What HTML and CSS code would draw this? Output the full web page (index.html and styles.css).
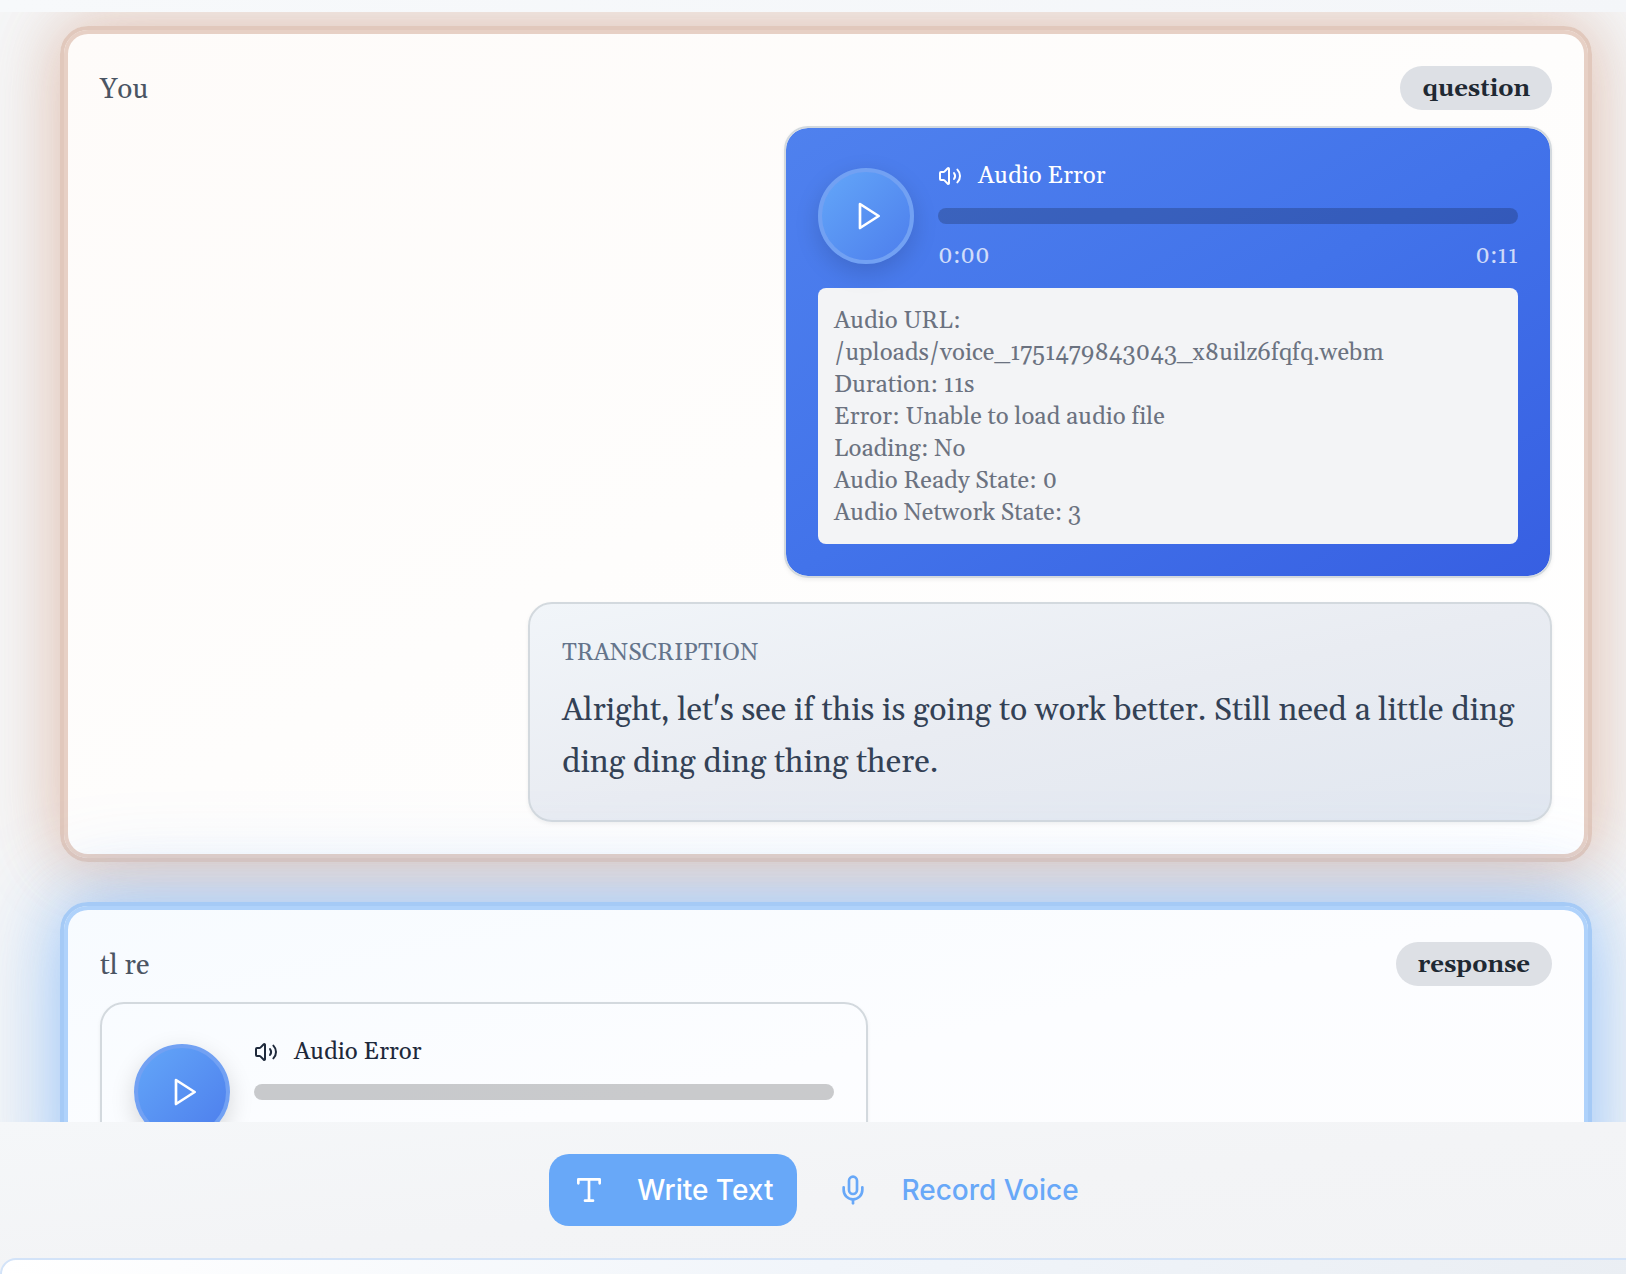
FILE: index.html
```html
<!DOCTYPE html>
<html lang="en">
<head>
<meta charset="utf-8">
<meta name="viewport" content="width=device-width, initial-scale=1">
<title>Conversation</title>
<link rel="stylesheet" href="styles.css">
</head>
<body>
<div class="app">
  <header class="topbar"></header>
  <main class="thread">
    <article class="card card-question">
      <header class="card-head">
        <span class="author">You</span>
        <span class="badge">question</span>
      </header>
      <section class="bubble bubble-audio bubble-sent">
        <div class="player">
          <button class="play" type="button" aria-label="Play">
            <svg viewBox="0 0 24 24"><polygon points="6 3 20 12 6 21 6 3"/></svg>
          </button>
          <div class="track">
            <div class="track-label">
              <svg viewBox="0 0 24 24"><path d="M11 4.702a.705.705 0 0 0-1.203-.498L6.413 7.587A1.4 1.4 0 0 1 5.416 8H3a1 1 0 0 0-1 1v6a1 1 0 0 0 1 1h2.416a1.4 1.4 0 0 1 .997.413l3.383 3.384A.705.705 0 0 0 11 19.298z"/><path d="M16 9a5 5 0 0 1 0 6"/><path d="M19.364 18.364a9 9 0 0 0 0-12.728"/></svg>
              <span>Audio Error</span>
            </div>
            <progress class="bar" value="0" max="11" aria-label="Playback position"></progress>
            <div class="times"><span>0:00</span><span>0:11</span></div>
          </div>
        </div>
        <div class="debug">
          <div>Audio URL: /uploads/voice_1751479843043_x8uilz6fqfq.webm</div>
          <div>Duration: 11s</div>
          <div>Error: Unable to load audio file</div>
          <div>Loading: No</div>
          <div>Audio Ready State: 0</div>
          <div>Audio Network State: 3</div>
        </div>
      </section>
      <section class="bubble bubble-text">
        <h2 class="caption">TRANSCRIPTION</h2>
        <p class="transcript">Alright, let's see if this is going to work better. Still need a little ding ding ding ding thing there.</p>
      </section>
    </article>

    <article class="card card-response">
      <header class="card-head">
        <span class="author">tl re</span>
        <span class="badge">response</span>
      </header>
      <section class="bubble bubble-audio bubble-received">
        <div class="player">
          <button class="play" type="button" aria-label="Play">
            <svg viewBox="0 0 24 24"><polygon points="6 3 20 12 6 21 6 3"/></svg>
          </button>
          <div class="track">
            <div class="track-label">
              <svg viewBox="0 0 24 24"><path d="M11 4.702a.705.705 0 0 0-1.203-.498L6.413 7.587A1.4 1.4 0 0 1 5.416 8H3a1 1 0 0 0-1 1v6a1 1 0 0 0 1 1h2.416a1.4 1.4 0 0 1 .997.413l3.383 3.384A.705.705 0 0 0 11 19.298z"/><path d="M16 9a5 5 0 0 1 0 6"/><path d="M19.364 18.364a9 9 0 0 0 0-12.728"/></svg>
              <span>Audio Error</span>
            </div>
            <progress class="bar" value="0" max="11" aria-label="Playback position"></progress>
          </div>
        </div>
      </section>
    </article>
  </main>

  <footer class="dock">
    <div class="modes">
      <button class="mode mode-active" type="button">
        <svg viewBox="0 0 24 24"><polyline points="4 7 4 4 20 4 20 7"/><line x1="9" x2="15" y1="20" y2="20"/><line x1="12" x2="12" y1="4" y2="20"/></svg>
        <span>Write Text</span>
      </button>
      <button class="mode" type="button">
        <svg viewBox="0 0 24 24"><path d="M12 2a3 3 0 0 0-3 3v7a3 3 0 0 0 6 0V5a3 3 0 0 0-3-3Z"/><path d="M19 10v2a7 7 0 0 1-14 0v-2"/><line x1="12" x2="12" y1="19" y2="22"/></svg>
        <span>Record Voice</span>
      </button>
    </div>
    <textarea class="composer" aria-label="Message"></textarea>
  </footer>
</div>
</body>
</html>
```

FILE: styles.css
```css
* {
  box-sizing: border-box;
}

body {
  margin: 0;
  overflow: hidden;
  background: #f5f6f7;
  color: #1e293b;
  font-family: Gelasio, Georgia, "Liberation Serif", serif;
  font-variant-ligatures: none;
}

svg {
  flex: none;
  fill: none;
  stroke: currentColor;
  stroke-width: 2;
  stroke-linecap: round;
  stroke-linejoin: round;
}

/* The column runs slightly wider than the window. */
.app {
  display: flex;
  flex-direction: column;
  height: 100vh;
  margin-right: -26px;
}

.topbar {
  flex: none;
  height: 12px;
  background: linear-gradient(90deg, #f7f9fb, #f4f6f9);
}

.thread {
  flex: 1;
  min-height: 0;
  overflow: hidden;
  display: flex;
  flex-direction: column;
  gap: 40px;
  padding: 14px 60px 0;
}

.card {
  flex: none;
  display: flex;
  flex-direction: column;
  padding: 36px;
  border: 4px solid;
  border-radius: 28px;
}

.card-question {
  border-color: #e1c8bc;
  background: linear-gradient(to bottom right, #fefbf9, #fefdfc 50%, #ffffff);
  box-shadow: inset 0 0 0 4px #e7d0c5, 0 0 60px rgba(205, 140, 110, 0.32), 0 0 80px rgba(205, 140, 110, 0.3);
}

.card-response {
  min-height: 320px;
  border-color: #a5caf6;
  background: linear-gradient(to bottom right, #f7fbff, #fcfdff 50%, #fdfdfe);
  box-shadow: inset 0 0 0 4px #afd2fb, 0 0 60px rgba(96, 165, 250, 0.38), 0 0 100px rgba(96, 165, 250, 0.38);
}

.card-head {
  display: flex;
  justify-content: space-between;
  align-items: center;
  margin-bottom: 16px;
}

.author {
  padding-top: 4px;
  color: #4b5563;
  font-size: 28px;
  line-height: 40px;
}

.badge {
  padding: 2px 22px 0;
  border-radius: 22px;
  background: #dde0e5;
  color: #1f2933;
  font-size: 24px;
  font-weight: 700;
  line-height: 42px;
}

.bubble {
  padding: 32px;
  border: 2px solid #d3d9de;
  border-radius: 24px;
  box-shadow: 0 2px 4px rgba(0, 0, 0, 0.06);
}

.bubble-audio {
  width: 768px;
  max-width: 100%;
}

.bubble-sent {
  align-self: flex-end;
  background: linear-gradient(to bottom right, #4f81ee, #4273ea 50%, #375fe2) padding-box;
  color: #ffffff;
}

.bubble-received {
  align-self: flex-start;
}

.bubble-text {
  align-self: flex-end;
  width: 1024px;
  max-width: 100%;
  margin-top: 24px;
  padding: 33px 32px 31px;
  background: linear-gradient(to bottom right, #f1f5f9, #e9ecf2 50%, #e1e7f0);
}

.player {
  display: flex;
  align-items: center;
  gap: 24px;
}

.play {
  position: relative;
  z-index: 1;
  flex: none;
  display: flex;
  align-items: center;
  justify-content: center;
  width: 96px;
  height: 96px;
  padding: 0 0 0 4px;
  border: 4px solid #72a1f3;
  border-radius: 50%;
  background: linear-gradient(135deg, #64a8f9, #4c7cec) border-box;
  box-shadow: 0 8px 24px rgba(0, 0, 0, 0.15);
  color: #ffffff;
}

.play svg {
  width: 32px;
  height: 32px;
}

.track {
  flex: 1;
  display: flex;
  flex-direction: column;
  gap: 16px;
  min-height: 112px;
  font-size: 24px;
  line-height: 32px;
}

.track-label {
  display: flex;
  align-items: center;
  gap: 16px;
}

.track-label svg {
  width: 24px;
  height: 24px;
}

.bar {
  appearance: none;
  display: block;
  width: 100%;
  height: 16px;
  border: 0;
  border-radius: 8px;
  background: rgba(0, 0, 0, 0.2);
}

.bar::-webkit-progress-bar {
  background: transparent;
}

.bar::-webkit-progress-value {
  border-radius: 8px;
  background: #60a5fa;
}

.times {
  display: flex;
  justify-content: space-between;
  color: rgba(255, 255, 255, 0.75);
}

.debug {
  margin-top: 16px;
  padding: 17px 16px 15px;
  border-radius: 8px;
  background: #f3f4f6;
  color: #6b7280;
  font-size: 24px;
  line-height: 32px;
}

.caption {
  margin: 0 0 16px;
  color: #64748b;
  font-size: 24px;
  font-weight: 400;
  line-height: 32px;
}

.transcript {
  margin: 0;
  color: #334155;
  font-size: 32px;
  line-height: 52px;
}

.dock {
  flex: 0 0 152px;
  position: relative;
  overflow: hidden;
  background: linear-gradient(to bottom right, #f5f7f9, #f3f4f6 50%, #f2f3f5);
}

.modes {
  display: flex;
  justify-content: center;
  gap: 16px;
  padding: 32px;
}

.mode {
  display: flex;
  align-items: center;
  gap: 32px;
  height: 72px;
  padding: 0 24px;
  border: 0;
  border-radius: 20px;
  background: transparent;
  color: #68a8f8;
  font-family: Inter, sans-serif;
  font-size: 28px;
  font-weight: 500;
}

.mode svg {
  width: 32px;
  height: 32px;
}

.mode-active {
  background: #68a8f8;
  color: #ffffff;
}

.composer {
  display: block;
  width: 100%;
  height: 160px;
  padding: 24px;
  border: 2px solid #d3e3f8;
  border-radius: 16px;
  background: linear-gradient(to right, #ffffff, #f1f5fa 50%, #eaeef3);
  font: inherit;
  resize: none;
}
```
